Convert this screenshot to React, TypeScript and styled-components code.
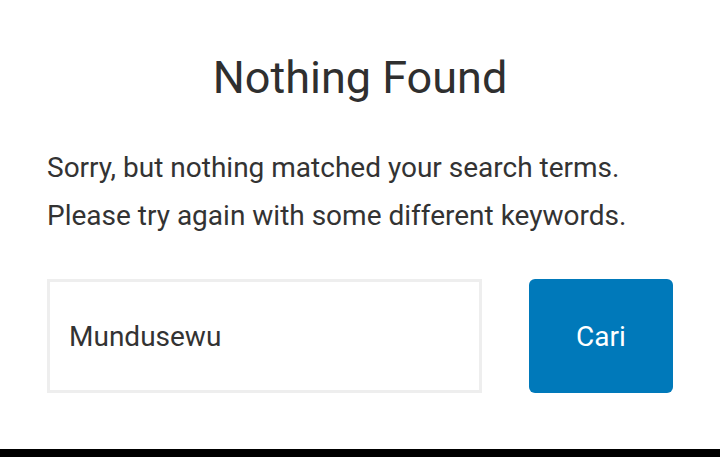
import React from "react";
import styled, { createGlobalStyle } from "styled-components";

const Global = createGlobalStyle`
  html, body { margin: 0; padding: 0; background: #fff; }
  body { font-family: Roboto, "Liberation Sans", sans-serif; }
  * { box-sizing: border-box; }
`;

const Page = styled.div`
  height: 100vh;
  display: flex;
  flex-direction: column;
  background: #fff;
`;

const Main = styled.main`
  flex: 1;
  padding: 50px 47px 0 47px;
  display: flex;
  flex-direction: column;
`;

const Title = styled.h1`
  margin: 0;
  font-family: Roboto, "Liberation Sans", sans-serif;
  font-weight: 400;
  font-size: 45px;
  line-height: 56px;
  color: #2f2f2f;
  text-align: center;
`;

const Text = styled.p`
  margin: 38px 0 0 0;
  font-size: 28px;
  line-height: 48px;
  color: #333;
`;

const SearchForm = styled.form`
  margin-top: 39px;
  display: flex;
  gap: 47px;
  height: 114px;
  width: 626px;
`;

const Field = styled.input`
  width: 435px;
  height: 100%;
  border: 3px solid #eeeeee;
  padding: 0 19px;
  font-family: Roboto, "Liberation Sans", sans-serif;
  font-size: 28px;
  color: #333;
  outline: none;
  background: #fff;
`;

const Button = styled.button`
  width: 144px;
  height: 100%;
  border: none;
  border-radius: 6px;
  background: #0079ba;
  color: #fff;
  font-family: Roboto, "Liberation Sans", sans-serif;
  font-size: 28px;
  cursor: pointer;
`;

const Footer = styled.footer`
  height: 8px;
  background: #000;
`;

export default function App() {
  return (
    <>
      <Global />
      <Page>
        <Main>
          <Title>Nothing Found</Title>
          <Text>
            Sorry, but nothing matched your search terms.
            <br />
            Please try again with some different keywords.
          </Text>
          <SearchForm onSubmit={(e) => e.preventDefault()}>
            <Field type="search" defaultValue="Mundusewu" />
            <Button type="submit">Cari</Button>
          </SearchForm>
        </Main>
        <Footer />
      </Page>
    </>
  );
}
